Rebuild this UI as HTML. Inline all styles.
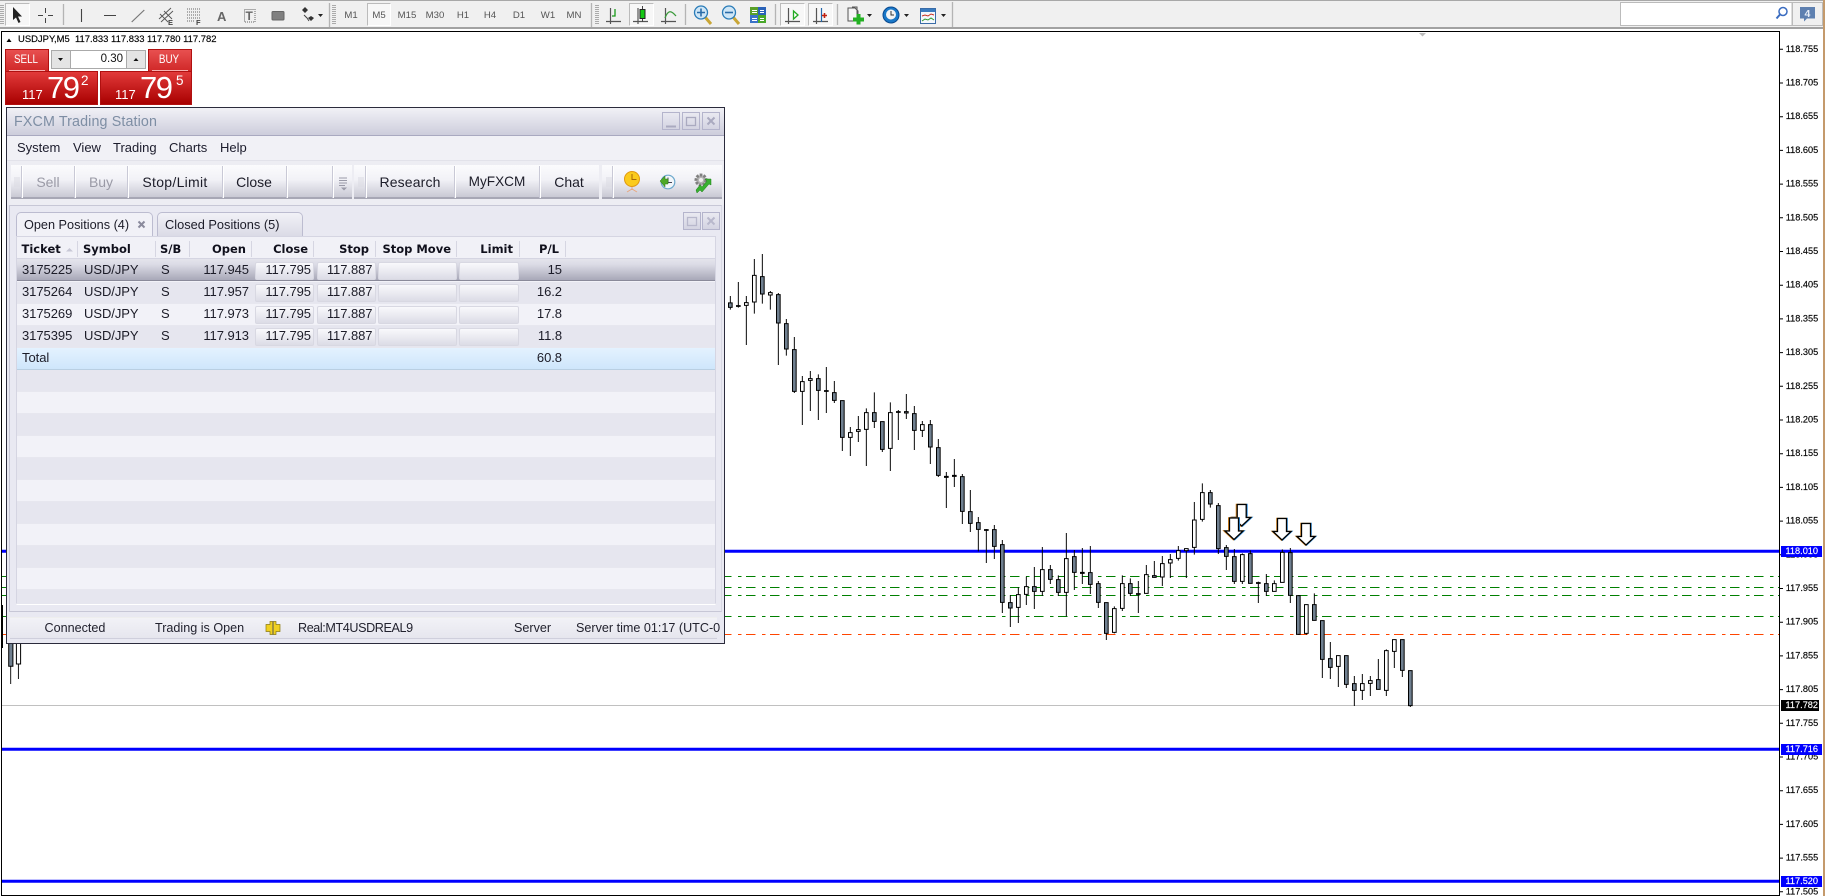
<!DOCTYPE html>
<html><head><meta charset="utf-8"><title>FXCM</title>
<style>
html,body{margin:0;padding:0;background:#fff;width:1825px;height:896px;overflow:hidden}
body{position:relative;font-family:"Liberation Sans",sans-serif;color:#1a1a2a}
div,span{position:absolute;box-sizing:border-box;white-space:nowrap}
svg{position:absolute;left:0;top:0;overflow:visible}
.tf{top:9px;width:28px;text-align:center;font-size:9.6px;line-height:13px;color:#555}
.sep{background:#c9c9d6;top:166px;height:32px;border-right:1px solid #fff;width:2px}
.tb{top:165px;height:34px;background:linear-gradient(#fbfbfd 0,#f2f2f7 45%,#c9c9d4 100%);border-bottom:2px solid #a7a7b5}
.tt{top:166px;height:32px;line-height:32px;font-size:14px;text-align:center;color:#1c1c28}
.m{top:140px;font-size:13px;line-height:16px;color:#1c1c2c}
.h{top:241px;font:bold 11.5px/16px "DejaVu Sans",sans-serif;color:#10101c}
.hs{top:241px;height:16px;width:1px;background:#d6d6e2}
.row{left:17px;width:698px;height:22px}
.c{top:2.5px;font-size:13px;line-height:16px;color:#1c1c28;letter-spacing:-.05px}
.btn{top:2px;height:18px;background:linear-gradient(#f9f9fc,#e9e9f0 55%,#dcdce6);border:1px solid #d8d8e2;border-radius:2px}
.st{top:620px;font-size:12.6px;line-height:16px;color:#22222e}
.wb{background:linear-gradient(#e9e9f1,#d4d4e2);border:1px solid #b4b4cc}
.lb{left:1781px;width:41px;height:11px;background:#0000ff;color:#fff;font-size:9.2px;line-height:11px;padding-left:4.5px;-webkit-text-stroke:.15px #fff}
.sb{color:#fff;font-size:12px;line-height:14px;text-align:center;width:44px;top:52px;transform:scaleX(.82)}
</style></head>
<body>

<!-- CHART -->
<svg width="1825" height="896" viewBox="0 0 1825 896">
<rect x="1823" y="0" width="2" height="896" fill="#c49a6c"/>
<rect x="1" y="31" width="1779" height="1" fill="#000"/>
<rect x="1" y="31" width="1" height="865" fill="#000"/>
<rect x="1" y="895" width="1779" height="1" fill="#000"/>
<rect x="1779" y="31" width="1" height="865" fill="#000"/>
<g stroke-width="1" fill="none" stroke-dasharray="9.5 6.5 3.5 4.5">
<path d="M2 576.5H1779M2 587.5H1779M2 595.5H1779M2 616.5H1779" stroke="#008000"/>
<path d="M2 634.5H1779" stroke="#ff4500"/>
</g>
<path d="M2 705.5H1779" stroke="#c0c0c0" fill="none"/>
<path d="M2 551.3H1779M2 749.3H1779M2 881.3H1779" stroke="#0000ff" stroke-width="3" fill="none"/>
<path d="M2.5 605V648" stroke="#000" stroke-width="1"/>
<path d="M10.7 640V684M18.4 640V679" stroke="#000" stroke-width=".9"/>
<path d="M8.7 640h4.2v26.3h-4.2z" fill="#708090" stroke="#000"/>
<path d="M16.4 640h4.2v24h-4.2z" fill="#fff" stroke="#000"/>

<g transform="translate(700 240) scale(.33333)" stroke="#000">
<path fill="none" stroke-width="2.9" d="M91 168V209M115 126V203M139 168V315M163 57V221M187 42V191M211 153V209M235 159V375M259 237V347M283 291V459M307 408V555M331 393V513M355 403V540M379 381V519M403 423V489M427 481V633M451 561V648M475 528V606M499 505V678M523 457V564M547 544V636M571 487V693M595 510V600"/>
<path fill="#708090" stroke-width="3" d="M85.5 188.5h11V202h-11zM109.5 197h11v2h-11zM181.5 110h11V162h-11zM229.5 164h11V249h-11zM253.5 251h11V327h-11zM277.5 329h11V454h-11zM349.5 416h11V451h-11zM373.5 452h11V454h-11zM397.5 458h11V481h-11zM421.5 482h11V592h-11zM517.5 518h11V544h-11zM541.5 545h11V628h-11zM589.5 515h11V517h-11z"/>
<path fill="#fff" stroke-width="3" d="M133.5 188h11V196h-11zM157.5 106h11V186h-11zM205.5 158h11V165h-11zM301.5 425h11V454h-11zM325.5 416h11V421h-11zM445.5 578h11V592h-11zM469.5 569h11V574h-11zM493.5 518h11V568h-11zM565.5 518h11V625h-11z"/>
</g>

<g transform="translate(900 380) scale(.33333)" stroke="#000">
<path fill="none" stroke-width="2.9" d="M19 42V117M43 78V210M67 123V171M91 120V252M115 177V291M139 276V384M163 237V321M187 282V432M211 330V456M235 411V514M259 447V549M283 435V537M307 480V699M331 645V741M355 622V729M379 590V675M403 561V687M427 501V648M451 555V612M475 586V648M499 459V709M523 510V630M547 504V612M571 498V642M595 603V684M619 667V780M643 679V760M667 586V693M691 595V648M715 603V699M739 555V641M763 543V593M787 528V618M811 522V594M835 498V542M859 505V594"/>
<path fill="#708090" stroke-width="3" d="M13.5 95h11V99h-11zM37.5 101h11V151h-11zM85.5 134h11V201h-11zM109.5 203h11V286h-11zM133.5 289h11V292h-11zM157.5 286h11V289h-11zM181.5 290h11V394h-11zM205.5 395h11V430h-11zM229.5 428h11V448h-11zM253.5 449h11V451h-11zM277.5 449h11V499h-11zM301.5 494h11V667h-11zM325.5 668h11V684h-11zM397.5 620h11V634h-11zM445.5 569h11V598h-11zM469.5 599h11V637h-11zM517.5 530h11V577h-11zM541.5 577h11V580h-11zM565.5 578h11V613h-11zM589.5 611h11V667h-11zM613.5 668h11V760h-11zM685.5 611h11V640h-11zM709.5 641h11V643h-11zM757.5 587h11V592h-11z"/>
<path fill="#fff" stroke-width="3" d="M61.5 134h11V151h-11zM349.5 644h11V682h-11zM373.5 620h11V643h-11zM421.5 569h11V634h-11zM493.5 536h11V637h-11zM637.5 686h11V757h-11zM661.5 611h11V685h-11zM733.5 584h11V640h-11zM781.5 551h11V591h-11zM805.5 539h11V549h-11zM829.5 512h11V535h-11zM853.5 506h11V512h-11z"/>
</g>

<g transform="translate(1180 470) scale(.33333)" stroke="#000">
<path fill="none" stroke-width="2.9" d="M43 96V254M67 40V155M91 60V113M115 99V252M139 225V300M163 237V342M187 250V342M211 241V341M235 335V399M259 312V378M283 331V365M307 238V338M331 234V399M355 376V494M379 403V494M403 370V452M427 451V624M451 516V627M475 556V651M499 556V654M523 618V708M547 612V690M571 618V678M595 567V659M619 538V678M643 508V594M667 508V621M691 601V711"/>
<path fill="#708090" stroke-width="3" d="M85.5 68h11V102h-11zM109.5 107h11V236h-11zM133.5 233h11V259h-11zM157.5 260h11V334h-11zM205.5 251h11V340h-11zM229.5 338h11V340h-11zM253.5 341h11V364h-11zM325.5 248h11V376h-11zM349.5 377h11V493h-11zM397.5 404h11V451h-11zM421.5 452h11V568h-11zM445.5 566h11V592h-11zM493.5 557h11V643h-11zM517.5 641h11V661h-11zM589.5 629h11V658h-11zM661.5 509h11V601h-11zM685.5 602h11V707h-11z"/>
<path fill="#fff" stroke-width="3" d="M37.5 150h11V232h-11zM61.5 68h11V148h-11zM181.5 254h11V334h-11zM277.5 341h11V364h-11zM301.5 247h11V337h-11zM373.5 404h11V490h-11zM469.5 557h11V589h-11zM541.5 641h11V661h-11zM565.5 632h11V640h-11zM613.5 542h11V661h-11zM637.5 509h11V544h-11z"/>
</g>

<!-- arrows -->
<g fill="none" stroke-linejoin="miter">
<g transform="translate(1241.7 504.5)">
<path d="M-4.5 0H4.5V13H9L0 21.5-9 13H-4.5Z" stroke="#2f8fe0" stroke-width="1.6" transform="translate(.7 0)"/>
<path d="M-4.5 0H4.5V13H9L0 21.5-9 13H-4.5Z" stroke="#e08a20" stroke-width="1.6" transform="translate(-.7 0)"/>
<path d="M-4.5 0H4.5V13H9L0 21.5-9 13H-4.5Z" stroke="#000" stroke-width="1.3" fill="#fff"/>
</g>
<g transform="translate(1234 518)">
<path d="M-4.5 0H4.5V13H9L0 21.5-9 13H-4.5Z" stroke="#2f8fe0" stroke-width="1.6" transform="translate(.7 0)"/>
<path d="M-4.5 0H4.5V13H9L0 21.5-9 13H-4.5Z" stroke="#e08a20" stroke-width="1.6" transform="translate(-.7 0)"/>
<path d="M-4.5 0H4.5V13H9L0 21.5-9 13H-4.5Z" stroke="#000" stroke-width="1.3" fill="#fff"/>
</g>
<g transform="translate(1282 518.5)">
<path d="M-4.5 0H4.5V13H9L0 21.5-9 13H-4.5Z" stroke="#2f8fe0" stroke-width="1.4" transform="translate(.6 0)"/>
<path d="M-4.5 0H4.5V13H9L0 21.5-9 13H-4.5Z" stroke="#e08a20" stroke-width="1.4" transform="translate(-.6 0)"/>
<path d="M-4.5 0H4.5V13H9L0 21.5-9 13H-4.5Z" stroke="#000" stroke-width="1.3" fill="#fff"/>
</g>
<g transform="translate(1306 523.5)">
<path d="M-4.5 0H4.5V13H9L0 21.5-9 13H-4.5Z" stroke="#2f8fe0" stroke-width="1.4" transform="translate(.6 0)"/>
<path d="M-4.5 0H4.5V13H9L0 21.5-9 13H-4.5Z" stroke="#e08a20" stroke-width="1.4" transform="translate(-.6 0)"/>
<path d="M-4.5 0H4.5V13H9L0 21.5-9 13H-4.5Z" stroke="#000" stroke-width="1.3" fill="#fff"/>
</g>
</g>

<!-- axis -->
<path d="M1780 49.3h3M1780 83h3M1780 116.7h3M1780 150.4h3M1780 184.1h3M1780 217.8h3M1780 251.5h3M1780 285.2h3M1780 318.9h3M1780 352.6h3M1780 386.3h3M1780 420h3M1780 453.7h3M1780 487.4h3M1780 521.1h3M1780 554.8h3M1780 588.5h3M1780 622.2h3M1780 655.9h3M1780 689.6h3M1780 723.3h3M1780 757h3M1780 790.7h3M1780 824.4h3M1780 858.1h3M1780 891.8h3" stroke="#000" fill="none"/>
<g font-family="Liberation Sans, sans-serif" font-size="9.2" fill="#000" stroke="#000" stroke-width=".15">
<text x="1785.7" y="51.8">118.755</text><text x="1785.7" y="85.5">118.705</text><text x="1785.7" y="119.2">118.655</text><text x="1785.7" y="152.9">118.605</text><text x="1785.7" y="186.6">118.555</text><text x="1785.7" y="220.3">118.505</text><text x="1785.7" y="254">118.455</text><text x="1785.7" y="287.7">118.405</text><text x="1785.7" y="321.4">118.355</text><text x="1785.7" y="355.1">118.305</text><text x="1785.7" y="388.8">118.255</text><text x="1785.7" y="422.5">118.205</text><text x="1785.7" y="456.2">118.155</text><text x="1785.7" y="489.9">118.105</text><text x="1785.7" y="523.6">118.055</text><text x="1785.7" y="557.3">118.005</text><text x="1785.7" y="591">117.955</text><text x="1785.7" y="624.7">117.905</text><text x="1785.7" y="658.4">117.855</text><text x="1785.7" y="692.1">117.805</text><text x="1785.7" y="725.8">117.755</text><text x="1785.7" y="759.5">117.705</text><text x="1785.7" y="793.2">117.655</text><text x="1785.7" y="826.9">117.605</text><text x="1785.7" y="860.6">117.555</text><text x="1785.7" y="894.3">117.505</text>
</g>
<path d="M1419 33h7l-3.5 3.5z" fill="#bbb"/>
</svg>
<div class="lb" style="top:545.5px">118.010</div>
<div class="lb" style="top:743.5px">117.716</div>
<div class="lb" style="top:875.5px">117.520</div>
<div class="lb" style="top:699.5px;width:38px;background:#000">117.782</div>

<!-- TOP TOOLBAR -->
<div style="left:0;top:0;width:1823px;height:29px;background:#f0f0f0;border-top:1px solid #a8a8a8;border-bottom:2px solid #a2a2a2"></div>
<div style="left:5px;top:3px;width:25px;height:23px;background:#f7f7f7;border:1px solid;border-color:#bbb #fff #fff #bbb"></div>
<div style="left:367px;top:3px;width:24px;height:23px;background:#f7f7f7;border:1px solid;border-color:#bbb #fff #fff #bbb"></div>
<div style="left:629px;top:3px;width:25px;height:23px;background:#f7f7f7;border:1px solid;border-color:#bbb #fff #fff #bbb"></div>
<div style="left:780px;top:3px;width:25px;height:23px;background:#f7f7f7;border:1px solid;border-color:#bbb #fff #fff #bbb"></div>
<div style="left:808px;top:3px;width:25px;height:23px;background:#f7f7f7;border:1px solid;border-color:#bbb #fff #fff #bbb"></div>
<div class="tf" style="left:337px">M1</div><div class="tf" style="left:365px">M5</div><div class="tf" style="left:393px">M15</div><div class="tf" style="left:421px">M30</div><div class="tf" style="left:449px">H1</div><div class="tf" style="left:476px">H4</div><div class="tf" style="left:505px">D1</div><div class="tf" style="left:534px">W1</div><div class="tf" style="left:560px">MN</div>
<svg width="1825" height="30" viewBox="0 0 1825 30">
<path d="M2 5V25M334 5V25M597 5V25" stroke="#aaa" stroke-width="4" stroke-dasharray="1 1" fill="none"/>
<path d="M63.5 4V25M329.5 3V27M591.5 3V27M685.5 4V25M775.5 4V25M837.5 4V25M952.5 2V27M1792 3V26" stroke="#b4b4b4" fill="none" stroke-width="1.3"/>
<path d="M13 7V20L16 17.5 18.5 23 20.5 22 18 16.5H22Z" fill="#222"/>
<path d="M38 15.5H43M48 15.5H53M45.5 8V13M45.5 18V23" stroke="#444" fill="none"/>
<path d="M81.5 9V22M104 15.5H116" stroke="#444" stroke-width="1.1" fill="none"/>
<path d="M131.7 22L144.3 10" stroke="#777" stroke-width="1.2" fill="none"/>
<path d="M159 19L171 8M161 22L173 11M160 14L168 22M164 11L172 19" stroke="#555" fill="none" stroke-width=".9"/>
<path d="M187 9H200M187 12H200M187 15H200M187 18H200M187 21H195" stroke="#666" stroke-dasharray="1 1" fill="none"/>
<text x="168" y="25" font-size="7.5" font-weight="bold" font-family="Liberation Sans" fill="#444">E</text>
<text x="196" y="25" font-size="7.5" font-weight="bold" font-family="Liberation Sans" fill="#444">F</text>
<text x="217" y="21" font-size="13" font-weight="bold" font-family="Liberation Sans" fill="#666">A</text>
<rect x="244.5" y="9.5" width="10.5" height="12.5" fill="none" stroke="#666" stroke-dasharray="1 1"/>
<text x="245.5" y="20" font-size="12" font-weight="bold" font-family="Liberation Sans" fill="#666">T</text>
<rect x="272" y="11.5" width="12" height="8.5" rx="1" fill="#808080" stroke="#666"/>
<path d="M302 10l3-3 3 3-3 3zM308 18l3-2 3 2-3 3z" fill="#333"/>
<path d="M304 15l3 3 2 3" stroke="#444" fill="none"/>
<path d="M318 14h5l-2.5 3z" fill="#222"/>
<g fill="none" stroke="#555" stroke-width="1.2">
<path d="M610.5 8V24M606 21.5H621"/><path d="M638 8V24M633 21.5H648"/><path d="M665.5 8V24M661 21.5H676"/>
<path d="M788.5 8V24M785 21.5H800"/><path d="M816.5 8V24M813 21.5H828"/>
</g>
<path d="M615 9V16H612" stroke="#1a9a1a" fill="none" stroke-width="1.3"/>
<path d="M642.5 6V22" stroke="#444"/><rect x="640" y="9.5" width="5" height="9" fill="#14c814" stroke="#222"/>
<path d="M665 18C668 10 671 10 676 16" stroke="#3a9a3a" fill="none" stroke-width="1.3"/>
<path d="M793.5 11V19L798 15Z" fill="#fff" stroke="#22aa22" stroke-width="1.3"/>
<path d="M821.5 8V22" stroke="#2266aa" stroke-width="1.2"/><path d="M822 15.5H827M824.5 13V18" stroke="#c02010" stroke-width="1.6"/>
<g transform="translate(2 0)">
<path d="M703 17L709 24" stroke="#c9a636" stroke-width="3"/>
<circle cx="699" cy="12.5" r="6.5" fill="#cfe6f6" stroke="#2a7cb8" stroke-width="1.3"/>
<path d="M695 12.5H703M699 8.5V16.5" stroke="#2a6ca8" stroke-width="1.6"/>
</g>
<path d="M733 17L739 24" stroke="#c9a636" stroke-width="3"/>
<circle cx="729" cy="12.5" r="6.5" fill="#cfe6f6" stroke="#2a7cb8" stroke-width="1.3"/>
<path d="M725 12.5H733" stroke="#2a6ca8" stroke-width="1.6"/>
<rect x="750" y="7" width="8" height="8" fill="#5aa02a"/><rect x="758" y="7" width="8" height="8" fill="#2a62b8"/><rect x="750" y="15" width="8" height="8" fill="#3a72c8"/><rect x="758" y="15" width="8" height="8" fill="#4aa82a"/>
<path d="M752 10.5h5M752 12.5h5M760 10.5h4M760 12.5h4M752 18.5h5M752 20.5h5M760 18.5h4M760 20.5h4" stroke="#fff"/>
<path d="M848 8H855L858 11V21H848Z" fill="#f4f4f4" stroke="#555"/>
<path d="M852 7H857V15" fill="none" stroke="#555"/>
<path d="M858.5 14V24.5M853 19.5H864" stroke="#22b022" stroke-width="4"/>
<path d="M867 14h5l-2.5 3zM904 14h5l-2.5 3zM941 14h5l-2.5 3z" fill="#222"/>
<circle cx="891" cy="15" r="8" fill="#1a78c8" stroke="#0a4a90"/><circle cx="891" cy="14.5" r="5" fill="#f4f4f4"/>
<path d="M891 11V15H894" stroke="#333" fill="none"/>
<rect x="920.5" y="8.5" width="15" height="15" fill="#f4f8fc" stroke="#3a6ca8"/>
<rect x="921" y="9" width="14" height="3" fill="#3a7cc0"/>
<path d="M922 16l3-1 3 1 3-2 3 1" stroke="#c83020" fill="none"/><path d="M922 21l3-2 3 1 3-2 3 2" stroke="#2a9a2a" fill="none"/>
<rect x="1620.5" y="2.5" width="171.5" height="23" fill="#fff" stroke="#bbb"/>
<rect x="1792.5" y="2.5" width="30" height="23" fill="#f0f0f0" stroke="#bbb"/>
<circle cx="1783" cy="11.5" r="4" fill="none" stroke="#3a6cc0" stroke-width="1.5"/>
<path d="M1780 14.5L1776.5 18.5" stroke="#3a6cc0" stroke-width="2"/>
<path d="M1800 7H1815V18.5H1807L1804 21.5V18.5H1800Z" fill="#5e80b0"/>
<text x="1804.5" y="17" font-size="10.5" font-weight="bold" font-family="Liberation Sans" fill="#e8eef6">4</text>
</svg>

<!-- chart header -->
<svg width="300" height="50"><path d="M6.5 42l2.500-3.500 2.500 3.500z" fill="#000"/></svg>
<div style="left:18px;top:33px;font-size:9.45px;line-height:13px;color:#000;-webkit-text-stroke:.15px #000">USDJPY,M5&nbsp; 117.833 117.833 117.780 117.782</div>

<!-- one-click trading -->
<div style="left:5px;top:49px;width:44px;height:23px;background:linear-gradient(#e85050,#d02828);border:1px solid #b01010"></div>
<div style="left:148px;top:49px;width:44px;height:23px;background:linear-gradient(#e85050,#d02828);border:1px solid #b01010"></div>
<div style="left:5px;top:71px;width:93px;height:34px;background:linear-gradient(#e23a3a,#a80000);border:1px solid #b01010"></div>
<div style="left:100px;top:71px;width:92px;height:34px;background:linear-gradient(#e23a3a,#a80000);border:1px solid #b01010"></div>
<div style="left:9px;top:70px;width:36px;height:1px;background:#f7b0b0"></div>
<div style="left:152px;top:70px;width:36px;height:1px;background:#f7b0b0"></div>
<div class="sb" style="left:4px">SELL</div>
<div class="sb" style="left:147px">BUY</div>
<div style="left:51px;top:50px;width:95px;height:19px;background:#fff;border:1px solid #aaa"></div>
<div style="left:52px;top:51px;width:19px;height:17px;background:#e4e4e4;border-right:1px solid #aaa"></div>
<div style="left:126px;top:51px;width:19px;height:17px;background:#e4e4e4;border-left:1px solid #aaa"></div>
<div style="left:96px;top:52px;width:27px;text-align:right;font-size:11.5px;line-height:14px;color:#111">0.30</div>
<svg width="200" height="70"><path d="M58 58h5l-2.500 3zM133.500 61h5l-2.500-3z" fill="#111"/></svg>
<div style="left:22px;top:88px;color:#fff;font-size:13px;line-height:14px">117</div>
<div style="left:47px;top:70px;color:#fff;font-size:31px;line-height:36px;letter-spacing:-1.5px">79</div>
<div style="left:81px;top:73px;color:#fff;font-size:13.5px;line-height:15px">2</div>
<div style="left:115px;top:88px;color:#fff;font-size:13px;line-height:14px">117</div>
<div style="left:140px;top:70px;color:#fff;font-size:31px;line-height:36px;letter-spacing:-1.5px">79</div>
<div style="left:176px;top:73px;color:#fff;font-size:13.5px;line-height:15px">5</div>

<!-- WINDOW -->
<div style="left:6px;top:107px;width:719px;height:537px;background:#e9e9f2;border:1px solid #2b2b3c"></div>
<div style="left:7px;top:108px;width:717px;height:28px;background:linear-gradient(#f1f1f6,#cdcddc);border-bottom:1px solid #a9a9c0"></div>
<div style="left:14px;top:113px;font-size:14.3px;line-height:18px;color:#7e8ea4;letter-spacing:.12px">FXCM Trading Station</div>
<div class="wb" style="left:662px;top:112px;width:18px;height:18px"></div>
<div class="wb" style="left:682px;top:112px;width:18px;height:18px"></div>
<div class="wb" style="left:702px;top:112px;width:18px;height:18px"></div>
<svg width="730" height="240">
<path d="M666 126.500H676" stroke="#aaaac0" stroke-width="2"/>
<rect x="686.500" y="117.500" width="9" height="8" fill="none" stroke="#aaaac0" stroke-width="1.300"/>
<path d="M707.500 117.500L714.500 124.500M714.500 117.500L707.500 124.500" stroke="#aaaac0" stroke-width="2"/>
</svg>
<!-- menu -->
<div style="left:7px;top:136px;width:717px;height:25px;background:#f1f1f6;border-bottom:1px solid #e2e2ea"></div>
<div class="m" style="left:17px">System</div><div class="m" style="left:73px">View</div><div class="m" style="left:113px">Trading</div><div class="m" style="left:169px">Charts</div><div class="m" style="left:220px">Help</div>
<!-- toolbar -->
<div style="left:7px;top:161px;width:717px;height:44px;background:#ededf3"></div>
<div class="tb" style="left:11px;width:341px"></div>
<div class="tb" style="left:354px;width:245px"></div>
<div class="tb" style="left:602px;width:120px"></div>
<div class="sep" style="left:21px"></div><div class="sep" style="left:74px"></div><div class="sep" style="left:127px"></div><div class="sep" style="left:222px"></div><div class="sep" style="left:286px"></div><div class="sep" style="left:332px"></div><div class="sep" style="left:365px"></div><div class="sep" style="left:454px"></div><div class="sep" style="left:539px"></div><div class="sep" style="left:612px"></div>
<div class="tt" style="left:24px;width:48px;color:#9a9aa6">Sell</div>
<div class="tt" style="left:77px;width:48px;color:#9a9aa6">Buy</div>
<div class="tt" style="left:130px;width:90px;letter-spacing:.3px">Stop/Limit</div>
<div class="tt" style="left:225px;width:58px">Close</div>
<div class="tt" style="left:368px;width:84px;letter-spacing:.15px">Research</div>
<div class="tt" style="left:457px;width:80px;font-size:13.6px">MyFXCM</div>
<div class="tt" style="left:541px;width:56px">Chat</div>
<svg width="730" height="240">
<path d="M15 177V187M17 177V187M19 177V187M359 177V187M361 177V187M363 177V187M607 177V187M609 177V187M611 177V187" stroke="#dadae2" fill="none"/>
<path d="M339 178H347M339 180.500H347M339 183H347M339 185.500H345" stroke="#9a9aa8" fill="none"/>
<path d="M341 187.500h6l-3 3z" fill="#9a9aa8"/>
<circle cx="632" cy="179" r="7.500" fill="#fbcb1c" stroke="#e09810"/>
<path d="M632 174V179.500H636.500" stroke="#a86a08" fill="none"/>
<path d="M632 187V190M627 192L632 189 637 192" stroke="#e8a880" fill="none"/>
<circle cx="668" cy="182" r="6.800" fill="#f2f6fa" stroke="#6ca8cc" stroke-width="1.200"/>
<path d="M668 177.500V182.500H672" stroke="#445" fill="none"/>
<path d="M660 181L665 176V179H668V184H665V187Z" fill="#4ea828" stroke="#2c7814" stroke-width=".5"/>
<circle cx="701" cy="180" r="5" fill="#b4b4b4" stroke="#808080" stroke-width="3" stroke-dasharray="2.500 1.200"/>
<circle cx="701" cy="180" r="2" fill="#eee"/>
<path d="M696 190l4-5 2 2 5-6-2-2h6v6l-2-1-7 8-2-2-3 3z" fill="#38b030" stroke="#1e8018" stroke-width=".5"/>
</svg>

<!-- panel -->
<div style="left:9px;top:205px;width:713px;height:407px;background:#e9e9f2;border-top:1px solid #c7c7d6;border-left:1px solid #c7c7d6;border-right:1px solid #d8d8e4;border-bottom:1px solid #c7c7d6"></div>
<div style="left:16px;top:212px;width:137px;height:26px;background:#f1f1f7;border:1px solid #bcbcd0;border-bottom:none;border-radius:5px 5px 0 0"></div>
<div style="left:157px;top:212px;width:146px;height:25px;background:linear-gradient(#f2f2f7,#dadae5);border:1px solid #bcbcd0;border-bottom:none;border-radius:5px 5px 0 0"></div>
<div style="left:24px;top:217px;font-size:12.7px;line-height:16px;color:#1c1c28">Open Positions (4)</div>
<div style="left:165px;top:217px;font-size:12.8px;line-height:16px;color:#1c1c28">Closed Positions (5)</div>
<svg width="730" height="240"><path d="M138.500 221.500L144.500 227.500M144.500 221.500L138.500 227.500" stroke="#8a8a9c" stroke-width="2" fill="none"/></svg>
<div class="wb" style="left:683px;top:212px;width:18px;height:18px"></div>
<div class="wb" style="left:702px;top:212px;width:18px;height:18px"></div>
<svg width="730" height="240"><rect x="687.500" y="217.500" width="9" height="8" fill="none" stroke="#b8b8cc" stroke-width="1.300"/><path d="M707.500 217.500L714.500 224.500M714.500 217.500L707.500 224.500" stroke="#b8b8cc" stroke-width="2"/></svg>

<!-- table -->
<div style="left:16px;top:236px;width:700px;height:369px;background:#f2f2f8;border:1px solid #d5d5e2;border-bottom:2px solid #fff"></div>
<div style="left:17px;top:237px;width:698px;height:22px;background:#f1f1f7;border-bottom:1px solid #d5d5e2"></div>
<div class="h" style="left:21.5px">Ticket</div><div class="h" style="left:83px">Symbol</div><div class="h" style="left:160px">S/B</div>
<div class="h" style="right:1579px">Open</div><div class="h" style="right:1517px">Close</div><div class="h" style="right:1456px">Stop</div><div class="h" style="right:1374px">Stop Move</div><div class="h" style="right:1312px">Limit</div><div class="h" style="right:1266px">P/L</div>
<svg width="100" height="260"><path d="M66 251.500h7l-3.500-3.500z" fill="#c8c8d6"/></svg>
<div class="hs" style="left:77px"></div><div class="hs" style="left:155px"></div><div class="hs" style="left:189px"></div><div class="hs" style="left:251px"></div><div class="hs" style="left:313px"></div><div class="hs" style="left:375px"></div><div class="hs" style="left:456px"></div><div class="hs" style="left:519px"></div><div class="hs" style="left:565px"></div>

<div style="left:17px;top:259px;width:698px;height:22px;background:linear-gradient(#e4e4ec,#dcdce6 25%,#a8a8b8);border-bottom:1px solid #8a8a9a"></div>
<div style="left:17px;top:281.5px;width:698px;height:66px;background:repeating-linear-gradient(#e6e6ef 0,#e6e6ef 21px,#d6d6e2 21px,#f7f7fb 22px,#f2f2f8 22px,#f2f2f8 43px,#d6d6e2 43px,#f7f7fb 44px)"></div>
<div style="left:17px;top:347.5px;width:698px;height:22px;background:linear-gradient(#e4f2ff,#cfe6fb);border-bottom:1px solid #b9cfe2"></div>
<div style="left:17px;top:369.5px;width:698px;height:234px;background:repeating-linear-gradient(#e6e6ef 0,#e6e6ef 21px,#d6d6e2 21px,#f7f7fb 22px,#f2f2f8 22px,#f2f2f8 43px,#d6d6e2 43px,#f7f7fb 44px)"></div>

<div class="row" style="top:259.5px">
<span class="c" style="left:5px">3175225</span><span class="c" style="left:67px">USD/JPY</span><span class="c" style="left:144px">S</span><span class="c" style="right:466px">117.945</span>
<span class="btn" style="left:238px;width:59px"></span><span class="c" style="right:404px">117.795</span>
<span class="btn" style="left:300px;width:59px"></span><span class="c" style="right:342.5px">117.887</span>
<span class="btn" style="left:361px;width:79px"></span><span class="btn" style="left:442px;width:60px"></span>
<span class="c" style="right:153px">15</span></div>
<div class="row" style="top:281.5px">
<span class="c" style="left:5px">3175264</span><span class="c" style="left:67px">USD/JPY</span><span class="c" style="left:144px">S</span><span class="c" style="right:466px">117.957</span>
<span class="btn" style="left:238px;width:59px"></span><span class="c" style="right:404px">117.795</span>
<span class="btn" style="left:300px;width:59px"></span><span class="c" style="right:342.5px">117.887</span>
<span class="btn" style="left:361px;width:79px"></span><span class="btn" style="left:442px;width:60px"></span>
<span class="c" style="right:153px">16.2</span></div>
<div class="row" style="top:303.5px">
<span class="c" style="left:5px">3175269</span><span class="c" style="left:67px">USD/JPY</span><span class="c" style="left:144px">S</span><span class="c" style="right:466px">117.973</span>
<span class="btn" style="left:238px;width:59px"></span><span class="c" style="right:404px">117.795</span>
<span class="btn" style="left:300px;width:59px"></span><span class="c" style="right:342.5px">117.887</span>
<span class="btn" style="left:361px;width:79px"></span><span class="btn" style="left:442px;width:60px"></span>
<span class="c" style="right:153px">17.8</span></div>
<div class="row" style="top:325.5px">
<span class="c" style="left:5px">3175395</span><span class="c" style="left:67px">USD/JPY</span><span class="c" style="left:144px">S</span><span class="c" style="right:466px">117.913</span>
<span class="btn" style="left:238px;width:59px"></span><span class="c" style="right:404px">117.795</span>
<span class="btn" style="left:300px;width:59px"></span><span class="c" style="right:342.5px">117.887</span>
<span class="btn" style="left:361px;width:79px"></span><span class="btn" style="left:442px;width:60px"></span>
<span class="c" style="right:153px">11.8</span></div>
<div class="row" style="top:347.5px">
<span class="c" style="left:5px">Total</span><span class="c" style="right:153px">60.8</span></div>

<!-- status bar -->
<div style="left:10px;top:617px;width:707px;height:22px;background:linear-gradient(#f2f2f7,#e6e6ee);border-top:1px solid #eee;border-bottom:1px solid #cfcfdc"></div>
<div class="st" style="left:44.5px">Connected</div>
<div class="st" style="left:155px">Trading is Open</div>
<svg width="300" height="640"><path d="M266 624.500H270V621.500H276V624.500H280V631.500H276V634.500H270V631.500H266Z" fill="#f0d020" stroke="#8a7a10" stroke-width=".7"/><path d="M273 621.500V634.500" stroke="#555"/></svg>
<div class="st" style="left:298px;letter-spacing:-.4px">Real:MT4USDREAL9</div>
<div class="st" style="left:514px">Server</div>
<div class="st" style="left:576px;width:144px;overflow:hidden">Server time 01:17 (UTC-05:00)</div>
</body></html>
